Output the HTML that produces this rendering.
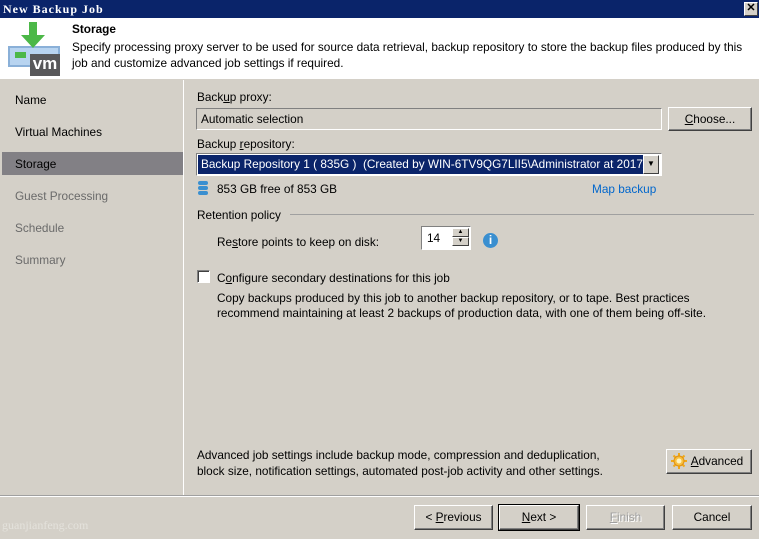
<!DOCTYPE html>
<html><head><style>
*{margin:0;padding:0;box-sizing:border-box}
body{width:759px;height:539px;overflow:hidden;background:#d4d0c8;font-family:"Liberation Sans",sans-serif;font-size:11.8px;color:#000;position:relative}
.a{position:absolute;white-space:nowrap}
.btn{position:absolute;background:#d4d0c8;border:1px solid;border-color:#fff #404040 #404040 #fff;box-shadow:inset -1px -1px 0 #808080;text-align:center;line-height:22px}
u{text-decoration:underline}
</style></head><body>
<div class="a" style="left:0;top:0;width:759px;height:18px;background:#0a246a"></div>
<div class="a" style="left:3px;top:2px;color:#fff;font-family:'Liberation Serif',serif;font-weight:bold;font-size:12px;letter-spacing:1px">New Backup Job</div>
<div class="a" style="left:744px;top:2px;width:14px;height:14px;background:#d4d0c8;border:1px solid;border-color:#fff #404040 #404040 #fff;font-size:11px;line-height:11px;text-align:center;font-weight:bold">✕</div>
<div class="a" style="left:0;top:18px;width:759px;height:61px;background:#fff"></div>
<div class="a" style="left:8px;top:46px;width:52px;height:21px;background:#b8d4f0;border:2px solid #8ab0d8"></div>
<div class="a" style="left:15px;top:52px;width:11px;height:6px;background:#4cb848"></div>
<div class="a" style="left:30px;top:54px;width:30px;height:22px;background:#58585a;color:#fff;font-weight:bold;font-size:17px;line-height:20px;text-align:center">vm</div>
<svg class="a" style="left:18px;top:22px" width="30" height="30"><path d="M11 0h8v13h8L15 26 3 13h8z" fill="#4cb848"/></svg>
<div class="a" style="left:72px;top:22px;font-weight:bold">Storage</div>
<div class="a" style="left:72px;top:39px;line-height:16px">Specify processing proxy server to be used for source data retrieval, backup repository to store the backup files produced by this<br>job and customize advanced job settings if required.</div>
<div class="a" style="left:183px;top:80px;width:1px;height:416px;background:#fff"></div>
<div class="a" style="left:2px;top:152px;width:181px;height:23px;background:#828085"></div>
<div class="a" style="left:15px;top:93px">Name</div>
<div class="a" style="left:15px;top:125px">Virtual Machines</div>
<div class="a" style="left:15px;top:157px">Storage</div>
<div class="a" style="left:15px;top:189px;color:#6a6a6a">Guest Processing</div>
<div class="a" style="left:15px;top:221px;color:#6a6a6a">Schedule</div>
<div class="a" style="left:15px;top:253px;color:#6a6a6a">Summary</div>
<div class="a" style="left:197px;top:90px">Back<u>u</u>p proxy:</div>
<div class="a" style="left:196px;top:108px;width:466px;height:22px;border:1px solid;border-color:#808080 #fff #fff #808080;background:#d4d0c8;padding:3px 4px">Automatic selection</div>
<div class="btn" style="left:668px;top:107px;width:84px;height:24px"><u>C</u>hoose...</div>
<div class="a" style="left:197px;top:137px">Backup <u>r</u>epository:</div>
<div class="a" style="left:196px;top:153px;width:466px;height:23px;border:1px solid;border-color:#808080 #fff #fff #808080;background:#fff"></div>
<div class="a" style="left:198px;top:155px;width:445px;height:19px;background:#0a246a;color:#fff;padding:2px 3px;overflow:hidden">Backup Repository 1 ( 835G )&nbsp; (Created by WIN-6TV9QG7LII5\Administrator at 2017/</div>
<div class="a" style="left:643px;top:155px;width:16px;height:19px;background:#d4d0c8;border:1px solid;border-color:#fff #404040 #404040 #fff;font-size:8px;text-align:center;line-height:16px">▼</div>
<svg class="a" style="left:197px;top:181px" width="12" height="15"><rect x="1" y="0" width="10" height="4" rx="2" fill="#3a8fd0"/><rect x="1" y="5" width="10" height="4" rx="2" fill="#3a8fd0"/><rect x="1" y="10" width="10" height="4" rx="2" fill="#3a8fd0"/></svg>
<div class="a" style="left:217px;top:182px">853 GB free of 853 GB</div>
<div class="a" style="left:592px;top:182px;color:#0066cc">Map backup</div>
<div class="a" style="left:197px;top:208px">Retention policy</div>
<div class="a" style="left:290px;top:214px;width:464px;height:1px;background:#a0a0a0"></div>
<div class="a" style="left:217px;top:235px">Re<u>s</u>tore points to keep on disk:</div>
<div class="a" style="left:421px;top:226px;width:50px;height:24px;border:1px solid;border-color:#808080 #fff #fff #808080;background:#fff;padding:4px 5px">14</div>
<div class="a" style="left:452px;top:228px;width:17px;height:9px;border:1px solid;border-color:#fff #404040 #404040 #fff;font-size:6px;line-height:7px;text-align:center;background:#d4d0c8">▲</div>
<div class="a" style="left:452px;top:237px;width:17px;height:9px;border:1px solid;border-color:#fff #404040 #404040 #fff;font-size:6px;line-height:7px;text-align:center;background:#d4d0c8">▼</div>
<div class="a" style="left:483px;top:233px;width:15px;height:15px;border-radius:50%;background:#3a8fd0;color:#fff;font-weight:bold;font-size:12px;text-align:center;line-height:15px">i</div>
<div class="a" style="left:197px;top:270px;width:13px;height:13px;background:#fff;border:1px solid;border-color:#808080 #fff #fff #808080;box-shadow:inset 1px 1px 0 #404040"></div>
<div class="a" style="left:217px;top:271px">C<u>o</u>nfigure secondary destinations for this job</div>
<div class="a" style="left:217px;top:291px;line-height:15px">Copy backups produced by this job to another backup repository, or to tape. Best practices<br>recommend maintaining at least 2 backups of production data, with one of them being off-site.</div>
<div class="a" style="left:197px;top:447px;line-height:16px">Advanced job settings include backup mode, compression and deduplication,<br>block size, notification settings, automated post-job activity and other settings.</div>
<div class="btn" style="left:666px;top:449px;width:86px;height:25px;padding-left:16px"><u>A</u>dvanced</div>
<svg class="a" style="left:671px;top:453px" width="16" height="16"><g stroke="#f0a818" stroke-width="2"><path d="M8 0v16M0 8h16M2.5 2.5l11 11M13.5 2.5l-11 11"/></g><circle cx="8" cy="8" r="5" fill="#f8c040" stroke="#e09010"/><circle cx="8" cy="8" r="2.5" fill="#fff3c0"/></svg>
<div class="a" style="left:0;top:495px;width:759px;height:1px;background:#a0a0a0"></div>
<div class="a" style="left:0;top:496px;width:759px;height:1px;background:#fff"></div>
<div class="btn" style="left:414px;top:505px;width:79px;height:25px">&lt; <u>P</u>revious</div>
<div class="btn" style="left:499px;top:505px;width:80px;height:25px;outline:1px solid #000"><u>N</u>ext &gt;</div>
<div class="btn" style="left:586px;top:505px;width:79px;height:25px;color:#a0a0a0;text-shadow:1px 1px 0 #fff"><u>F</u>inish</div>
<div class="btn" style="left:672px;top:505px;width:80px;height:25px">Cancel</div>
<div class="a" style="left:2px;top:518px;color:#e4e2dc;font-size:12px;font-family:'Liberation Serif',serif">guanjianfeng.com</div>
</body></html>
